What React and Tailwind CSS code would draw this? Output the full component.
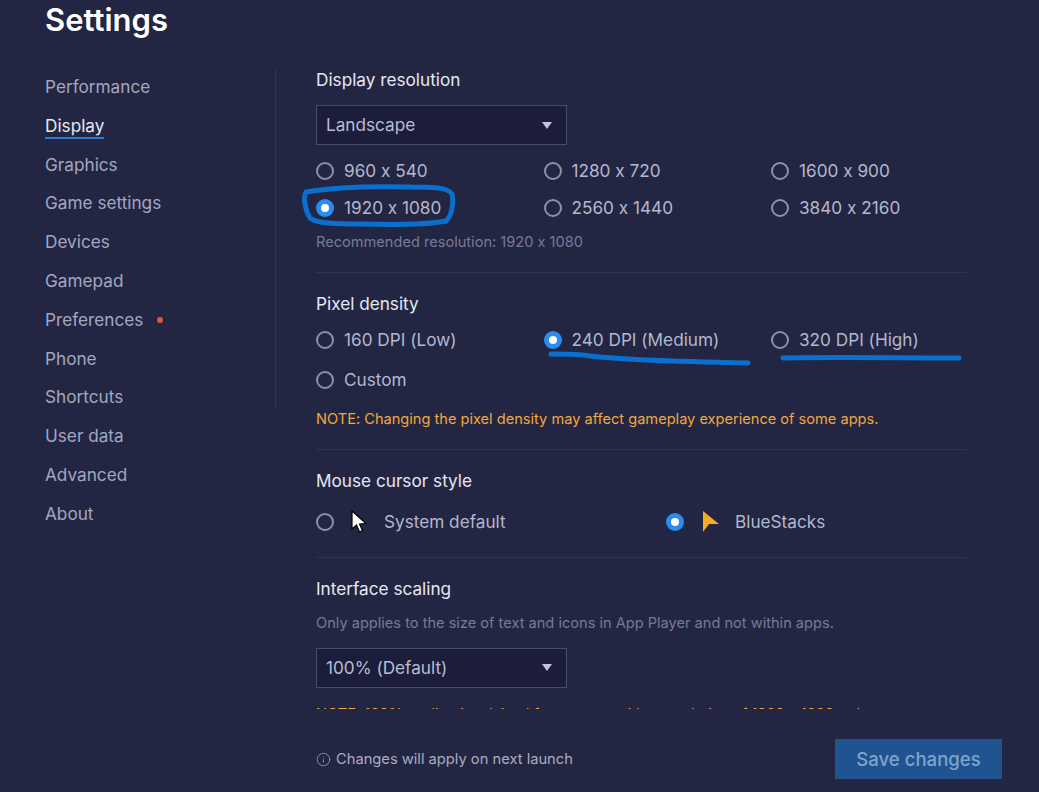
import { Info } from "lucide-react";

const navItems = ["Performance", "Display", "Graphics", "Game settings", "Devices", "Gamepad", "Preferences", "Phone", "Shortcuts", "User data", "Advanced", "About"];

const Radio = ({ checked }) =>
    checked ? (
        <span className="w-[18px] h-[18px] shrink-0 rounded-full bg-[#2a8cf0] flex items-center justify-center">
            <span className="w-[8px] h-[8px] rounded-full bg-white"></span>
        </span>
    ) : (
        <span className="w-[18px] h-[18px] shrink-0 rounded-full border-2 border-[#8d90a8]"></span>
    );

const Option = ({ label, checked, className = "" }) => (
    <div className={`flex items-center gap-[10px] ${className}`}>
        <Radio checked={checked} />
        <span className="text-[#b4b7cd]">{label}</span>
    </div>
);

const Dropdown = ({ value }) => (
    <div className="w-[251px] h-[40px] bg-[#1b1d3a] border border-[#494c69] flex items-center justify-between pl-[9px] pr-[14px] text-[#b9bcd0]">
        <span>{value}</span>
        <span className="w-0 h-0 border-l-[5px] border-r-[5px] border-t-[7px] border-l-transparent border-r-transparent border-t-[#c4c6d6]"></span>
    </div>
);

const App = () => {
    return (
        <div className="relative w-[1039px] h-[792px] overflow-hidden bg-[#232642] text-[17.2px] leading-[22px] [font-feature-settings:'calt'_0]" style={{ fontFamily: "Inter, sans-serif" }}>
            <h1 className="absolute left-[45px] top-[2px] text-[31px] leading-[36px] font-semibold text-white">Settings</h1>

            <div className="flex pt-[68px] h-[709px]">
                <div className="w-[276px] shrink-0 h-[340px] border-r border-[#30334f] pl-[45px]">
                    <div className="flex flex-col items-start gap-[16.8px] pt-[8px]">
                        {navItems.map(item => (
                            <div key={item} className={item === "Display" ? "relative text-[#e6e8f2]" : "flex items-center text-[#a3a6c0]"}>
                                {item}
                                {item === "Preferences" && <span className="ml-[14px] w-[6px] h-[6px] rounded-full bg-[#e5533d]"></span>}
                                {item === "Display" && <span className="absolute left-0 right-0 top-[22px] h-[2px] bg-[#2a7ad6]"></span>}
                            </div>
                        ))}
                    </div>
                </div>

                <div className="w-[651px] ml-[40px] overflow-hidden">
                    <h2 className="text-[#e6e8f2] mt-[1px]">Display resolution</h2>
                    <div className="mt-[14px]"><Dropdown value="Landscape" /></div>
                    <div className="grid grid-cols-[227.5px_227.5px_1fr] gap-y-[14.6px] mt-[15px]">
                        <Option label="960 x 540" />
                        <Option label="1280 x 720" />
                        <Option label="1600 x 900" />
                        <Option label="1920 x 1080" checked />
                        <Option label="2560 x 1440" />
                        <Option label="3840 x 2160" />
                    </div>
                    <p className="text-[14.6px] leading-[18px] text-[#777a96] mt-[14.4px]">Recommended resolution: 1920 x 1080</p>

                    <div className="border-t border-[#30334f] mt-[21px] pt-[20px]">
                        <h2 className="text-[#e6e8f2]">Pixel density</h2>
                        <div className="grid grid-cols-[227.5px_227.5px_1fr] gap-y-[18px] mt-[14px]">
                            <Option label="160 DPI (Low)" />
                            <Option label="240 DPI (Medium)" checked />
                            <Option label="320 DPI (High)" />
                            <Option label="Custom" />
                        </div>
                        <p className="text-[14.6px] leading-[18px] text-[#f2a63c] mt-[19px]">NOTE: Changing the pixel density may affect gameplay experience of some apps.</p>
                    </div>

                    <div className="border-t border-[#30334f] mt-[21px] pt-[20px]">
                        <h2 className="text-[#e6e8f2]">Mouse cursor style</h2>
                        <div className="flex mt-[18px]">
                            <div className="flex items-center w-[350px]">
                                <Radio />
                                <svg className="ml-[16px]" width="18" height="24" viewBox="0 0 18 24">
                                    <path d="M2 1 L2 19 L6.5 15 L9.5 22 L12.5 20.5 L9.5 14 L16 13.5 Z" fill="#fff" stroke="#000" strokeWidth="1.2" />
                                </svg>
                                <span className="ml-[16px] text-[#b4b7cd]">System default</span>
                            </div>
                            <div className="flex items-center">
                                <Radio checked />
                                <svg className="ml-[17px]" width="20" height="24" viewBox="0 0 20 24">
                                    <path d="M2 1 L18 14 L8 14 L2 22 Z" fill="#f5ab22" />
                                </svg>
                                <span className="ml-[14px] text-[#b4b7cd]">BlueStacks</span>
                            </div>
                        </div>
                    </div>

                    <div className="border-t border-[#30334f] mt-[23px] pt-[20px]">
                        <h2 className="text-[#e6e8f2]">Interface scaling</h2>
                        <p className="text-[14.6px] leading-[18px] text-[#777a96] mt-[14px]">Only applies to the size of text and icons in App Player and not within apps.</p>
                        <div className="mt-[16px]"><Dropdown value="100% (Default)" /></div>
                        <p className="text-[14.6px] leading-[18px] text-[#f2a63c] mt-[17px]">NOTE: 100% scaling is advised for screens with a resolution of 1920 x 1080 or lower.</p>
                    </div>
                </div>
            </div>

            <div className="flex items-center justify-between pl-[316px] pr-[37px] mt-[30px]">
                <div className="flex items-center gap-[5px] text-[14.7px] leading-[20px] text-[#a9acc4]">
                    <Info size={15} strokeWidth={1.5} className="text-[#8d90a8]" />
                    <span>Changes will apply on next launch</span>
                </div>
                <button className="w-[167px] h-[40px] bg-[#20538f] text-[#7fa3cd] text-[18.6px] font-medium">Save changes</button>
            </div>

            <svg className="absolute inset-0 pointer-events-none" width="1039" height="792" viewBox="0 0 1039 792" fill="none" stroke="#0a70cf" strokeLinecap="round" strokeLinejoin="round">
                <path d="M306 192 C330 188 370 186 410 187 C430 187 448 187 452 194 C454 202 452 216 446 221 C425 225 395 225 360 224 C340 224 318 224 310 218 C305 210 303 198 306 192 Z" strokeWidth="5" />
                <path d="M551 354 C565 354 580 354 590 356 C620 360 700 362 748 363" strokeWidth="5" />
                <path d="M783 358 C830 357 900 358 959 358" strokeWidth="5" />
            </svg>
        </div>
    );
};

export default App;
